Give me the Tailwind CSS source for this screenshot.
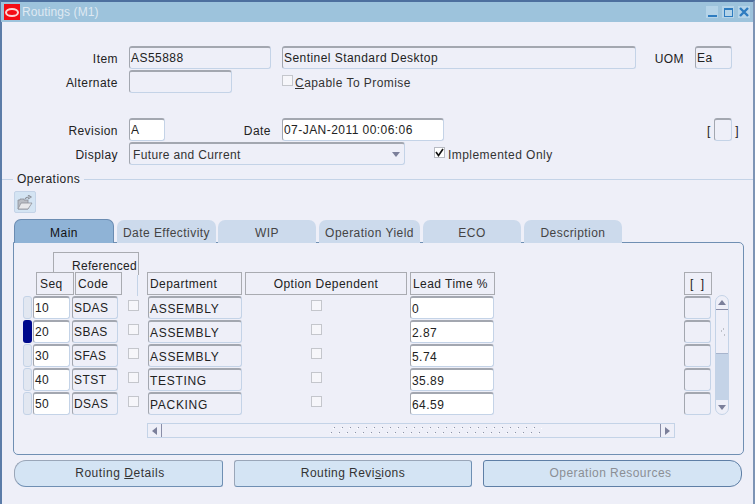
<!DOCTYPE html>
<html lang="en">
<head>
  <meta charset="UTF-8" />
  <title>Routings (M1)</title>
  <script src="https://cdn.jsdelivr.net/npm/@tailwindcss/browser@4"></script>
</head>
<body class="bg-white overflow-hidden font-['Liberation_Sans',sans-serif] text-[12px] tracking-[0.45px] text-[#222]">
  <div class="w-[755px] h-[504px] bg-[#eeeff8] border-t-2 border-t-[#4d6f9e] border-l-2 border-l-[#5b7ca8] border-r-2 border-r-[#7d94b5] relative">

    <!-- Title bar -->
    <div class="h-[20px] bg-[#9dc3dc] flex items-center ml-[-1px] mr-0">
      <div class="w-[16px] h-[16px] bg-[#f40c14] ml-[3px] flex items-center justify-center">
        <div class="w-[14px] h-[9px] rounded-[50%] border-2 border-[#fbd5d5]"></div>
      </div>
      <span class="ml-[2px] text-[#dfe9f2] leading-none tracking-[0.1px]">Routings (M1)</span>
      <div class="ml-auto mr-[3px] flex items-center gap-[4px]">
        <div class="w-[12px] h-[12px] bg-[#b4d3e8] flex items-end justify-center pb-[1px]"><div class="w-[9px] h-[2px] bg-[#2e7cc0]"></div></div>
        <div class="w-[12px] h-[12px] bg-[#b4d3e8] flex items-center justify-center"><div class="w-[9px] h-[9px] border border-t-2 border-[#2e7cc0]"></div></div>
        <div class="w-[12px] h-[12px] bg-[#b4d3e8] flex items-center justify-center">
          <svg width="10" height="10" viewBox="0 0 10 10"><path d="M1 1 L9 9 M9 1 L1 9" stroke="#2e7cc0" stroke-width="2.4"/></svg>
        </div>
      </div>
    </div>

    <!-- Header form -->
    <div class="pt-[24px] pl-[0px]">
      <div class="flex h-[24px]">
        <label class="w-[116px] text-right leading-[27px]">Item</label>
        <div class="ml-[11px] w-[142px] h-[23px] border border-[#c4d3e7] border-t-2 border-t-[#a3a7b0] border-l-[#a3a7b0] rounded-[3px] pl-[1px] leading-[21px]">AS55888</div>
        <div class="ml-[11px] w-[354px] h-[23px] border border-[#c4d3e7] border-t-2 border-t-[#a3a7b0] border-l-[#a3a7b0] rounded-[3px] pl-[1px] leading-[21px]">Sentinel Standard Desktop</div>
        <label class="w-[48px] text-right leading-[27px]">UOM</label>
        <div class="ml-[11px] w-[37px] h-[23px] border border-[#c4d3e7] border-t-2 border-t-[#a3a7b0] border-l-[#a3a7b0] rounded-[3px] pl-[1px] leading-[21px]">Ea</div>
      </div>
      <div class="flex h-[24px]">
        <label class="w-[116px] text-right leading-[27px]">Alternate</label>
        <div class="ml-[11px] w-[103px] h-[23px] border border-[#c4d3e7] border-t-2 border-t-[#a3a7b0] border-l-[#a3a7b0] rounded-[3px]"></div>
        <div class="ml-[50px] flex items-start pt-[5px]">
          <div class="w-[11px] h-[11px] bg-[#f6f6fa] border border-[#c4c6cc]"></div>
          <span class="ml-[2px] mt-[2px] leading-[12px] text-[#333]"><u>C</u>apable To Promise</span>
        </div>
      </div>
      <div class="flex h-[24px] mt-[24px]">
        <label class="w-[116px] text-right leading-[26px]">Revision</label>
        <div class="ml-[11px] w-[36px] h-[23px] bg-white border border-[#c4d3e7] border-t-2 border-t-[#a3a7b0] border-l-[#a3a7b0] rounded-[3px] pl-[1px] leading-[21px]">A</div>
        <label class="w-[106px] text-right leading-[26px]">Date</label>
        <div class="ml-[11px] w-[162px] h-[23px] bg-white border border-[#c4d3e7] border-t-2 border-t-[#a3a7b0] border-l-[#a3a7b0] rounded-[3px] pl-[1px] leading-[21px]">07-JAN-2011 00:06:06</div>
        <span class="ml-[263px] leading-[26px] tracking-normal">[</span>
        <div class="ml-[4px] w-[18px] h-[23px] border border-[#c4d3e7] border-t-2 border-t-[#a3a7b0] border-l-[#a3a7b0] rounded-[3px]"></div>
        <span class="ml-[3px] leading-[26px]">]</span>
      </div>
      <div class="flex h-[24px]">
        <label class="w-[116px] text-right leading-[26px]">Display</label>
        <div class="ml-[11px] w-[276px] h-[23px] border border-[#c4d3e7] border-t-2 border-t-[#a3a7b0] border-l-[#a3a7b0] rounded-[3px] pl-[3px] pr-[4px] pt-[1px] flex items-center justify-between text-[#333]">
          <span class="tracking-[0.35px]">Future and Current</span>
          <svg width="8" height="5" viewBox="0 0 8 5"><path d="M0 0 H8 L4 5 Z" fill="#7b7f9a"/></svg>
        </div>
        <div class="ml-[29px] flex items-start pt-[5px]">
          <div class="w-[11px] h-[11px] bg-white border border-[#b7bac2] flex items-center justify-center">
            <svg width="9" height="9" viewBox="0 0 9 9"><path d="M1 4 L3.5 7.5 L8 1" fill="none" stroke="#111" stroke-width="1.6"/></svg>
          </div>
          <span class="ml-[3px] mt-[2px] leading-[12px] text-[#333]">Implemented Only</span>
        </div>
      </div>
    </div>

    <!-- Operations -->
    <div class="flex items-center mt-[5px] h-[16px]">
      <div class="w-[11px] h-px bg-[#c4d3e7]"></div>
      <span class="mx-[4px] leading-[18px]">Operations</span>
      <div class="flex-1 h-px bg-[#c4d3e7]"></div>
    </div>
    <div class="ml-[12px] mt-[4px] w-[22px] h-[22px] bg-[#d4e4f3] border border-[#c4d3e7] rounded-[2px] flex items-center justify-center">
      <svg width="16" height="15" viewBox="0 0 16 15">
        <path d="M1 14 V5 H3 V4 H7 V5 H11 V14 Z" fill="#b9bdc4" stroke="#8d9199" stroke-width="0.8"/>
        <path d="M1 14 L4 8 H15 L11 14 Z" fill="#e8e9ec" stroke="#8d9199" stroke-width="0.8"/>
        <path d="M8 4 C9 2 11 2 12 2 M11 0 L14 2 L11 4" fill="none" stroke="#8d9199" stroke-width="1.2"/>
      </svg>
    </div>

    <!-- Tabs -->
    <div class="flex items-end ml-[12px] mt-[6px] h-[24px] relative z-10 text-[#444]">
      <div class="w-[100px] h-[24px] bg-[#8fb3d6] border border-[#6b8cb2] border-b-0 rounded-t-[7px] text-center leading-[26px] text-[#111]">Main</div>
      <div class="ml-[3px] w-[99px] h-[23px] bg-[#ccdaec] rounded-t-[7px] text-center leading-[26px]">Date Effectivity</div>
      <div class="ml-[2px] w-[98px] h-[23px] bg-[#ccdaec] rounded-t-[7px] text-center leading-[26px]">WIP</div>
      <div class="ml-[3px] w-[101px] h-[23px] bg-[#ccdaec] rounded-t-[7px] text-center leading-[26px]">Operation Yield</div>
      <div class="ml-[3px] w-[98px] h-[23px] bg-[#ccdaec] rounded-t-[7px] text-center leading-[26px]">ECO</div>
      <div class="ml-[3px] w-[98px] h-[23px] bg-[#ccdaec] rounded-t-[7px] text-center leading-[26px]">Description</div>
    </div>

    <!-- Panel -->
    <div class="ml-[11px] w-[731px] h-[213px] -mt-px border border-[#6f8fb3] rounded-[5px] rounded-tl-none relative pt-[29px]">
      <!-- Referenced header sits behind Seq/Code -->
      <div class="absolute left-[39px] top-[9px] w-[86px] h-[23px] border border-[#a9abb1] border-b-0 text-right pr-[1px] leading-[26px] tracking-[0.3px]">Referenced</div>
      <div class="absolute left-[123px] top-[32px] w-px h-[21px] bg-[#c4d3e7]"></div>

      <div class="flex h-[24px] relative">
        <div class="ml-[22px] w-[38px] h-[23px] border border-[#a9abb1] bg-[#eeeff8] pl-[3px] leading-[23px]">Seq</div>
        <div class="ml-px w-[47px] h-[23px] border border-[#a9abb1] bg-[#eeeff8] pl-[2px] leading-[23px]">Code</div>
        <div class="ml-[25px] w-[95px] h-[23px] border border-[#a9abb1] pl-[2px] leading-[23px]">Department</div>
        <div class="ml-[3px] w-[162px] h-[23px] border border-[#a9abb1] text-center leading-[23px]">Option Dependent</div>
        <div class="ml-[3px] w-[85px] h-[23px] border border-[#a9abb1] pl-[2px] leading-[23px]">Lead Time %</div>
        <div class="ml-[189px] w-[28px] h-[23px] border border-[#a9abb1] text-center leading-[23px] tracking-[2px]">[ ]</div>
      </div>

      <div id="rows" class="relative">
        <script>
          const ops = [
            ['10', 'SDAS', 'ASSEMBLY', '0'],
            ['20', 'SBAS', 'ASSEMBLY', '2.87'],
            ['30', 'SFAS', 'ASSEMBLY', '5.74'],
            ['40', 'STST', 'TESTING', '35.89'],
            ['50', 'DSAS', 'PACKING', '64.59'],
          ];
          document.currentScript.parentElement.insertAdjacentHTML('beforeend', ops.map((op, i) => `
            <div class="flex h-[24px]">
              <div class="ml-[9px] w-[9px] h-[23px] rounded-[3px] ${i === 1 ? 'bg-[#000a8c]' : 'bg-[#e2e7f1] border border-[#c4d3e7]'}"></div>
              <div class="ml-[1px] w-[37px] h-[23px] bg-white border border-[#c4d3e7] border-t-2 border-t-[#a3a7b0] border-l-[#a3a7b0] rounded-[3px] pl-[1px] leading-[21px]">${op[0]}</div>
              <div class="ml-[2px] w-[46px] h-[23px] border border-[#c4d3e7] border-t-2 border-t-[#a3a7b0] border-l-[#a3a7b0] rounded-[3px] pl-[1px] leading-[21px]">${op[1]}</div>
              <div class="ml-[10px] mt-[4px] w-[11px] h-[11px] bg-[#f6f6fa] border border-[#c4c6cc]"></div>
              <div class="ml-[9px] w-[94px] h-[23px] border border-[#c4d3e7] border-t-2 border-t-[#a3a7b0] border-l-[#a3a7b0] rounded-[3px] pl-[1px] leading-[23px] tracking-[0.7px]">${op[2]}</div>
              <div class="ml-[69px] mt-[4px] w-[11px] h-[11px] bg-[#f6f6fa] border border-[#c4c6cc]"></div>
              <div class="ml-[88px] w-[84px] h-[23px] bg-white border border-[#c4d3e7] border-t-2 border-t-[#a3a7b0] border-l-[#a3a7b0] rounded-[3px] pl-[1px] leading-[23px]">${op[3]}</div>
              <div class="ml-[190px] w-[27px] h-[23px] border border-[#c4d3e7] border-t-2 border-t-[#a3a7b0] border-l-[#a3a7b0] rounded-[3px]"></div>
            </div>`).join(''));
        </script>
        <!-- Vertical scrollbar -->
        <div class="absolute left-[701px] top-[-1px] w-[14px] h-[120px] flex flex-col border border-[#c4d3e7] rounded-[7px] overflow-hidden">
          <div class="h-[14px] flex items-center justify-center border-b border-[#8a8ea8]"><svg width="8" height="5" viewBox="0 0 8 5"><path d="M4 0 L8 5 H0 Z" fill="#7b7f9a"/></svg></div>
          <div class="h-[44px] flex items-center justify-center border-b border-[#a7b4cc]"><svg width="8" height="10" viewBox="0 0 8 10"><path d="M5 2 h1 M3 4 h1 M6 8 h1" stroke="#8d9199"/></svg></div>
          <div class="flex-1 bg-[#c4d3e7]"></div>
          <div class="h-[14px] flex items-center justify-center"><svg width="8" height="5" viewBox="0 0 8 5"><path d="M0 0 H8 L4 5 Z" fill="#7b7f9a"/></svg></div>
        </div>
      </div>

      <!-- Horizontal scrollbar -->
      <div class="ml-[133px] mt-[7px] w-[528px] h-[15px] flex border border-[#c4d3e7]">
        <div class="w-[14px] flex items-center justify-center border-r border-[#8a8ea8] rounded-l-[7px]"><svg width="5" height="8" viewBox="0 0 5 8"><path d="M5 0 V8 L0 4 Z" fill="#7b7f9a"/></svg></div>
        <div class="flex-1 flex items-center pl-[168px]">
          <svg width="212" height="9" viewBox="0 0 212 9">
            <defs>
              <pattern id="grip" width="8" height="9" patternUnits="userSpaceOnUse">
                <rect x="4" y="1" width="1" height="1" fill="#8d93a6"/>
                <rect x="3" y="2" width="1" height="1" fill="#ffffff"/>
                <rect x="1" y="6" width="1" height="1" fill="#8d93a6"/>
                <rect x="0" y="7" width="1" height="1" fill="#ffffff"/>
              </pattern>
            </defs>
            <rect width="212" height="9" fill="url(#grip)"/>
          </svg>
        </div>
        <div class="w-[14px] flex items-center justify-center border-l border-[#8a8ea8] rounded-r-[7px]"><svg width="5" height="8" viewBox="0 0 5 8"><path d="M0 0 V8 L5 4 Z" fill="#7b7f9a"/></svg></div>
      </div>
    </div>

    <!-- Bottom buttons -->
    <div class="flex ml-[12px] mt-[5px] text-[#333]">
      <div class="w-[209px] h-[27px] bg-[#d4e4f4] border border-[#9aa6b8] border-r-[#6f8fb3] border-b-[#6f8fb3] rounded-l-[12px] rounded-r-[3px] text-center pl-[3px] leading-[25px] tracking-[0.55px]">Routing <u>D</u>etails</div>
      <div class="ml-[11px] w-[238px] h-[27px] bg-[#d4e4f4] border border-[#9aa6b8] border-r-[#6f8fb3] border-b-[#6f8fb3] rounded-[3px] text-center leading-[25px]">Routing Revi<u>s</u>ions</div>
      <div class="ml-[11px] w-[259px] h-[27px] bg-[#d4e4f4] border border-[#5f7fa6] rounded-r-[12px] rounded-l-[3px] text-center pr-[4px] leading-[25px] text-[#8b8f95]">Operation Resources</div>
    </div>
  </div>
</body>
</html>
